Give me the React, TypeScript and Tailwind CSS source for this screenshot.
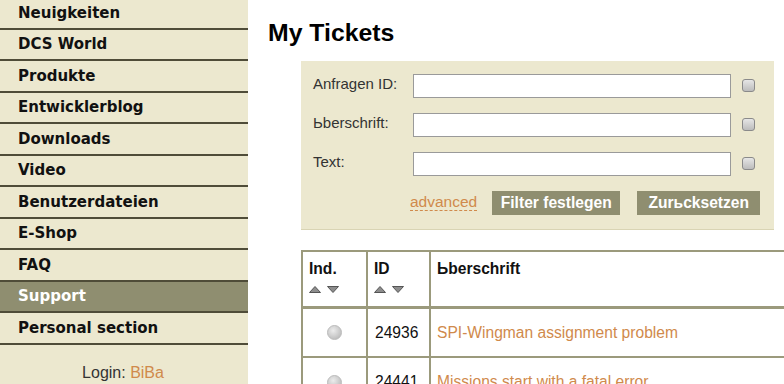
import React from 'react';

const navItems = [
  'Neuigkeiten',
  'DCS World',
  'Produkte',
  'Entwicklerblog',
  'Downloads',
  'Video',
  'Benutzerdateien',
  'E-Shop',
  'FAQ',
  'Support',
  'Personal section',
];

const filterRows = ['Anfragen ID:', 'Ьberschrift:', 'Text:'];

const tickets = [
  { id: '24936', title: 'SPI-Wingman assignment problem' },
  { id: '24441', title: 'Missions start with a fatal error' },
];

const SortArrows = () => (
  <div className="flex items-center gap-[6px] mt-[6px]">
    <svg width="12" height="7" viewBox="0 0 12 7">
      <polygon points="6,0.5 11.5,6.5 0.5,6.5" fill="#8d8d8d" stroke="#555" strokeWidth="1" />
    </svg>
    <svg width="12" height="7" viewBox="0 0 12 7">
      <polygon points="0.5,0.5 11.5,0.5 6,6.5" fill="#8d8d8d" stroke="#555" strokeWidth="1" />
    </svg>
  </div>
);

const Checkbox = () => (
  <div className="w-[13px] h-[13px] rounded-[3px] border border-[#8a8a8a] bg-gradient-to-b from-[#e6e6e6] to-[#bcbcbc]" />
);

export default function App() {
  return (
    <div className="flex w-[784px] h-[384px] overflow-hidden bg-white font-['Liberation_Sans',Arial,sans-serif]">
      {/* Sidebar */}
      <div className="w-[248px] shrink-0 h-full bg-[#ece8cf]">
        <div className="-mt-[2px]">
          {navItems.map((item) => (
            <div
              key={item}
              className={`h-[31.5px] border-b-2 border-[#4f4c38] flex items-center pl-[18px] font-['DejaVu_Sans',Verdana,sans-serif] font-bold text-[15px] ${
                item === 'Support' ? 'bg-[#8f8e70] text-white' : 'text-[#111]'
              }`}
            >
              {item}
            </div>
          ))}
        </div>
        <div className="text-center text-[16px] text-[#333] mt-[16px] pr-[2px]">
          Login: <span className="text-[#d08a4c]">BiBa</span>
        </div>
      </div>

      {/* Main */}
      <div className="flex-1 min-w-0 overflow-hidden pl-[20px]">
        <h1 className="text-[24.8px] font-bold text-black mt-[19px] leading-[28px]">My Tickets</h1>

        <div className="ml-[33px] mt-[14px] w-[473px] bg-[#ece8cf] border-b border-[#d9d4b4] pt-[13px] pb-[14px] pl-[12px]">
          {filterRows.map((label) => (
            <div key={label} className="flex items-start h-[39px]">
              <div className="w-[100px] text-[15px] text-[#333] leading-[18px] pt-[1px]">{label}</div>
              <input
                type="text"
                className="w-[318px] h-[24px] bg-white border border-[#9a9a9a] outline-none"
              />
              <div className="ml-[11px] mt-[5px]">
                <Checkbox />
              </div>
            </div>
          ))}
          <div className="flex items-center mt-[-1px] pl-[97px]">
            <span className="text-[15.5px] text-[#d08a4c] border-b border-dashed border-[#d08a4c] leading-[17px] mb-[2px]">
              advanced
            </span>
            <button className="ml-[15px] mt-[1px] h-[24px] w-[128px] bg-[#8f8e70] text-white font-bold text-[15.6px]">
              Filter festlegen
            </button>
            <button className="ml-[17px] mt-[1px] h-[24px] w-[123px] bg-[#8f8e70] text-white font-bold text-[15.6px]">
              Zurьcksetzen
            </button>
          </div>
        </div>

        <table className="ml-[33px] mt-[20px] w-[700px] border-collapse border-2 border-[#9b9a7c] text-[15.6px]">
          <thead>
            <tr className="border-b-[3px] border-[#9b9a7c]">
              <th className="w-[65px] h-[56px] align-top text-left pl-[6px] pt-[5px] border-r-2 border-[#9b9a7c] font-bold text-[#111]">
                Ind.
                <SortArrows />
              </th>
              <th className="w-[63px] align-top text-left pl-[6px] pt-[5px] border-r-2 border-[#9b9a7c] font-bold text-[#111]">
                ID
                <SortArrows />
              </th>
              <th className="align-top text-left pl-[6px] pt-[5px] font-bold text-[#111]">Ьberschrift</th>
            </tr>
          </thead>
          <tbody>
            {tickets.map((t) => (
              <tr key={t.id} className="border-b-2 border-[#9b9a7c]">
                <td className="h-[50px] border-r-2 border-[#9b9a7c]">
                  <div className="flex justify-center">
                    <div className="w-[15px] h-[15px] rounded-full bg-[radial-gradient(circle_at_40%_35%,#ececec,#b0b0b0)] border border-[#bdbdbd]" />
                  </div>
                </td>
                <td className="border-r-2 border-[#9b9a7c] text-[#111] pl-[7px]">{t.id}</td>
                <td className="text-[#d08a4c] pl-[6px]">{t.title}</td>
              </tr>
            ))}
          </tbody>
        </table>
      </div>
    </div>
  );
}
